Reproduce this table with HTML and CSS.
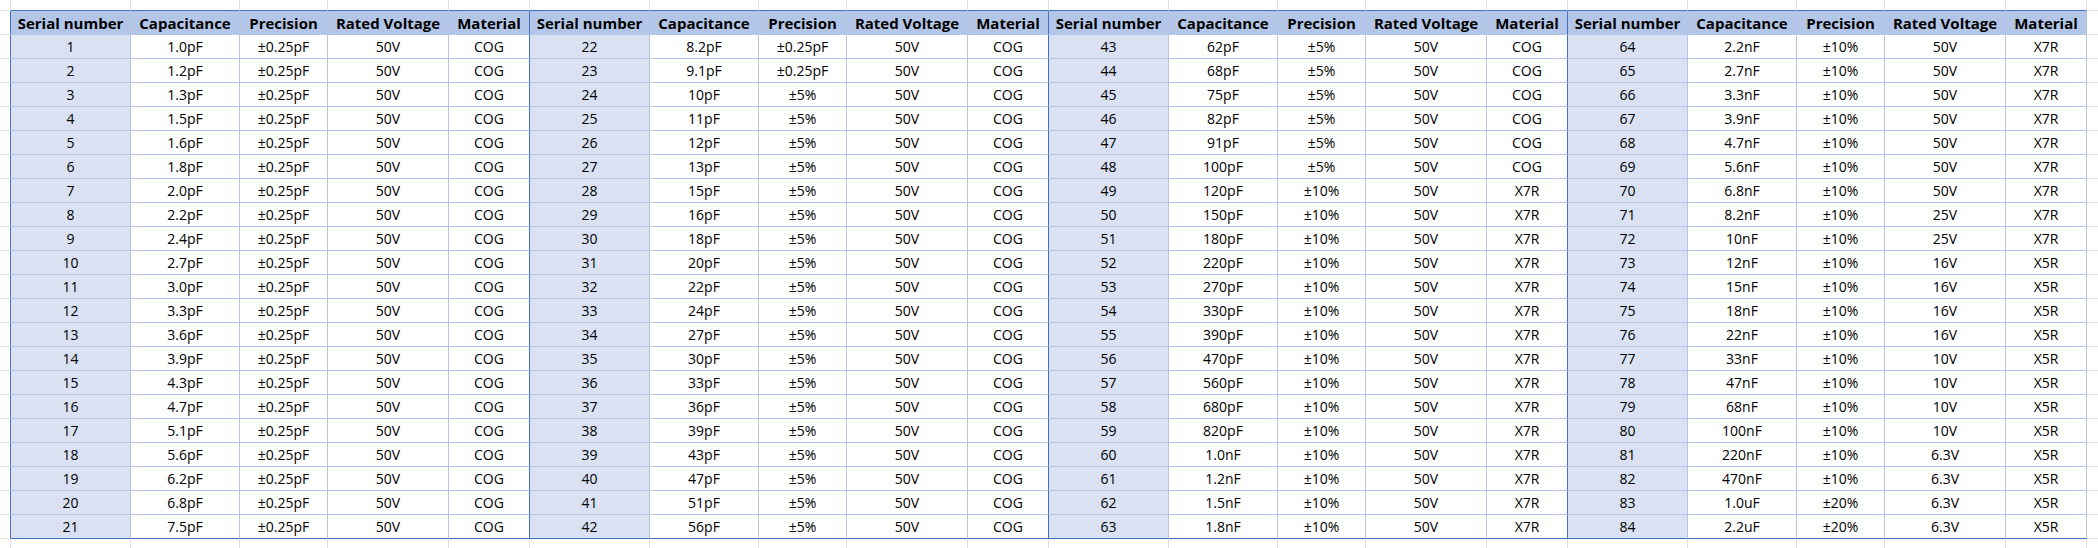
FILE: index.html
```html
<!DOCTYPE html>
<html lang="en">
<head>
<meta charset="utf-8">
<title>Capacitor values</title>
<link rel="stylesheet" href="styles.css">
</head>
<body>
<table class="sheet">
<colgroup>
<col class="w-edge">
<col class="w1"><col class="w2"><col class="w3"><col class="w4"><col class="w5">
<col class="w1"><col class="w2"><col class="w3"><col class="w4"><col class="w5">
<col class="w1"><col class="w2"><col class="w3"><col class="w4"><col class="w5">
<col class="w1"><col class="w2"><col class="w3"><col class="w4"><col class="w5">
<col class="w-edge-r">
</colgroup>
<tbody>
<tr class="top"><td class="edge"></td><td></td><td></td><td></td><td></td><td></td><td></td><td></td><td></td><td></td><td></td><td></td><td></td><td></td><td></td><td></td><td></td><td></td><td></td><td></td><td></td><td class="edge-r"></td></tr>
<tr class="head"><td class="edge"></td><th>Serial number</th><th>Capacitance</th><th>Precision</th><th>Rated Voltage</th><th class="end">Material</th><th>Serial number</th><th>Capacitance</th><th>Precision</th><th>Rated Voltage</th><th class="end">Material</th><th>Serial number</th><th>Capacitance</th><th>Precision</th><th>Rated Voltage</th><th class="end">Material</th><th>Serial number</th><th>Capacitance</th><th>Precision</th><th>Rated Voltage</th><th>Material</th><td class="edge-r"></td></tr>
<tr class="r"><td class="edge"></td><td class="sn">1</td><td>1.0pF</td><td>±0.25pF</td><td>50V</td><td class="end">COG</td><td class="sn">22</td><td>8.2pF</td><td>±0.25pF</td><td>50V</td><td class="end">COG</td><td class="sn">43</td><td>62pF</td><td>±5%</td><td>50V</td><td class="end">COG</td><td class="sn">64</td><td>2.2nF</td><td>±10%</td><td>50V</td><td>X7R</td><td class="edge-r"></td></tr>
<tr class="r"><td class="edge"></td><td class="sn">2</td><td>1.2pF</td><td>±0.25pF</td><td>50V</td><td class="end">COG</td><td class="sn">23</td><td>9.1pF</td><td>±0.25pF</td><td>50V</td><td class="end">COG</td><td class="sn">44</td><td>68pF</td><td>±5%</td><td>50V</td><td class="end">COG</td><td class="sn">65</td><td>2.7nF</td><td>±10%</td><td>50V</td><td>X7R</td><td class="edge-r"></td></tr>
<tr class="r"><td class="edge"></td><td class="sn">3</td><td>1.3pF</td><td>±0.25pF</td><td>50V</td><td class="end">COG</td><td class="sn">24</td><td>10pF</td><td>±5%</td><td>50V</td><td class="end">COG</td><td class="sn">45</td><td>75pF</td><td>±5%</td><td>50V</td><td class="end">COG</td><td class="sn">66</td><td>3.3nF</td><td>±10%</td><td>50V</td><td>X7R</td><td class="edge-r"></td></tr>
<tr class="r"><td class="edge"></td><td class="sn">4</td><td>1.5pF</td><td>±0.25pF</td><td>50V</td><td class="end">COG</td><td class="sn">25</td><td>11pF</td><td>±5%</td><td>50V</td><td class="end">COG</td><td class="sn">46</td><td>82pF</td><td>±5%</td><td>50V</td><td class="end">COG</td><td class="sn">67</td><td>3.9nF</td><td>±10%</td><td>50V</td><td>X7R</td><td class="edge-r"></td></tr>
<tr class="r"><td class="edge"></td><td class="sn">5</td><td>1.6pF</td><td>±0.25pF</td><td>50V</td><td class="end">COG</td><td class="sn">26</td><td>12pF</td><td>±5%</td><td>50V</td><td class="end">COG</td><td class="sn">47</td><td>91pF</td><td>±5%</td><td>50V</td><td class="end">COG</td><td class="sn">68</td><td>4.7nF</td><td>±10%</td><td>50V</td><td>X7R</td><td class="edge-r"></td></tr>
<tr class="r"><td class="edge"></td><td class="sn">6</td><td>1.8pF</td><td>±0.25pF</td><td>50V</td><td class="end">COG</td><td class="sn">27</td><td>13pF</td><td>±5%</td><td>50V</td><td class="end">COG</td><td class="sn">48</td><td>100pF</td><td>±5%</td><td>50V</td><td class="end">COG</td><td class="sn">69</td><td>5.6nF</td><td>±10%</td><td>50V</td><td>X7R</td><td class="edge-r"></td></tr>
<tr class="r"><td class="edge"></td><td class="sn">7</td><td>2.0pF</td><td>±0.25pF</td><td>50V</td><td class="end">COG</td><td class="sn">28</td><td>15pF</td><td>±5%</td><td>50V</td><td class="end">COG</td><td class="sn">49</td><td>120pF</td><td>±10%</td><td>50V</td><td class="end">X7R</td><td class="sn">70</td><td>6.8nF</td><td>±10%</td><td>50V</td><td>X7R</td><td class="edge-r"></td></tr>
<tr class="r"><td class="edge"></td><td class="sn">8</td><td>2.2pF</td><td>±0.25pF</td><td>50V</td><td class="end">COG</td><td class="sn">29</td><td>16pF</td><td>±5%</td><td>50V</td><td class="end">COG</td><td class="sn">50</td><td>150pF</td><td>±10%</td><td>50V</td><td class="end">X7R</td><td class="sn">71</td><td>8.2nF</td><td>±10%</td><td>25V</td><td>X7R</td><td class="edge-r"></td></tr>
<tr class="r"><td class="edge"></td><td class="sn">9</td><td>2.4pF</td><td>±0.25pF</td><td>50V</td><td class="end">COG</td><td class="sn">30</td><td>18pF</td><td>±5%</td><td>50V</td><td class="end">COG</td><td class="sn">51</td><td>180pF</td><td>±10%</td><td>50V</td><td class="end">X7R</td><td class="sn">72</td><td>10nF</td><td>±10%</td><td>25V</td><td>X7R</td><td class="edge-r"></td></tr>
<tr class="r"><td class="edge"></td><td class="sn">10</td><td>2.7pF</td><td>±0.25pF</td><td>50V</td><td class="end">COG</td><td class="sn">31</td><td>20pF</td><td>±5%</td><td>50V</td><td class="end">COG</td><td class="sn">52</td><td>220pF</td><td>±10%</td><td>50V</td><td class="end">X7R</td><td class="sn">73</td><td>12nF</td><td>±10%</td><td>16V</td><td>X5R</td><td class="edge-r"></td></tr>
<tr class="r"><td class="edge"></td><td class="sn">11</td><td>3.0pF</td><td>±0.25pF</td><td>50V</td><td class="end">COG</td><td class="sn">32</td><td>22pF</td><td>±5%</td><td>50V</td><td class="end">COG</td><td class="sn">53</td><td>270pF</td><td>±10%</td><td>50V</td><td class="end">X7R</td><td class="sn">74</td><td>15nF</td><td>±10%</td><td>16V</td><td>X5R</td><td class="edge-r"></td></tr>
<tr class="r"><td class="edge"></td><td class="sn">12</td><td>3.3pF</td><td>±0.25pF</td><td>50V</td><td class="end">COG</td><td class="sn">33</td><td>24pF</td><td>±5%</td><td>50V</td><td class="end">COG</td><td class="sn">54</td><td>330pF</td><td>±10%</td><td>50V</td><td class="end">X7R</td><td class="sn">75</td><td>18nF</td><td>±10%</td><td>16V</td><td>X5R</td><td class="edge-r"></td></tr>
<tr class="r"><td class="edge"></td><td class="sn">13</td><td>3.6pF</td><td>±0.25pF</td><td>50V</td><td class="end">COG</td><td class="sn">34</td><td>27pF</td><td>±5%</td><td>50V</td><td class="end">COG</td><td class="sn">55</td><td>390pF</td><td>±10%</td><td>50V</td><td class="end">X7R</td><td class="sn">76</td><td>22nF</td><td>±10%</td><td>16V</td><td>X5R</td><td class="edge-r"></td></tr>
<tr class="r"><td class="edge"></td><td class="sn">14</td><td>3.9pF</td><td>±0.25pF</td><td>50V</td><td class="end">COG</td><td class="sn">35</td><td>30pF</td><td>±5%</td><td>50V</td><td class="end">COG</td><td class="sn">56</td><td>470pF</td><td>±10%</td><td>50V</td><td class="end">X7R</td><td class="sn">77</td><td>33nF</td><td>±10%</td><td>10V</td><td>X5R</td><td class="edge-r"></td></tr>
<tr class="r"><td class="edge"></td><td class="sn">15</td><td>4.3pF</td><td>±0.25pF</td><td>50V</td><td class="end">COG</td><td class="sn">36</td><td>33pF</td><td>±5%</td><td>50V</td><td class="end">COG</td><td class="sn">57</td><td>560pF</td><td>±10%</td><td>50V</td><td class="end">X7R</td><td class="sn">78</td><td>47nF</td><td>±10%</td><td>10V</td><td>X5R</td><td class="edge-r"></td></tr>
<tr class="r"><td class="edge"></td><td class="sn">16</td><td>4.7pF</td><td>±0.25pF</td><td>50V</td><td class="end">COG</td><td class="sn">37</td><td>36pF</td><td>±5%</td><td>50V</td><td class="end">COG</td><td class="sn">58</td><td>680pF</td><td>±10%</td><td>50V</td><td class="end">X7R</td><td class="sn">79</td><td>68nF</td><td>±10%</td><td>10V</td><td>X5R</td><td class="edge-r"></td></tr>
<tr class="r"><td class="edge"></td><td class="sn">17</td><td>5.1pF</td><td>±0.25pF</td><td>50V</td><td class="end">COG</td><td class="sn">38</td><td>39pF</td><td>±5%</td><td>50V</td><td class="end">COG</td><td class="sn">59</td><td>820pF</td><td>±10%</td><td>50V</td><td class="end">X7R</td><td class="sn">80</td><td>100nF</td><td>±10%</td><td>10V</td><td>X5R</td><td class="edge-r"></td></tr>
<tr class="r"><td class="edge"></td><td class="sn">18</td><td>5.6pF</td><td>±0.25pF</td><td>50V</td><td class="end">COG</td><td class="sn">39</td><td>43pF</td><td>±5%</td><td>50V</td><td class="end">COG</td><td class="sn">60</td><td>1.0nF</td><td>±10%</td><td>50V</td><td class="end">X7R</td><td class="sn">81</td><td>220nF</td><td>±10%</td><td>6.3V</td><td>X5R</td><td class="edge-r"></td></tr>
<tr class="r"><td class="edge"></td><td class="sn">19</td><td>6.2pF</td><td>±0.25pF</td><td>50V</td><td class="end">COG</td><td class="sn">40</td><td>47pF</td><td>±5%</td><td>50V</td><td class="end">COG</td><td class="sn">61</td><td>1.2nF</td><td>±10%</td><td>50V</td><td class="end">X7R</td><td class="sn">82</td><td>470nF</td><td>±10%</td><td>6.3V</td><td>X5R</td><td class="edge-r"></td></tr>
<tr class="r"><td class="edge"></td><td class="sn">20</td><td>6.8pF</td><td>±0.25pF</td><td>50V</td><td class="end">COG</td><td class="sn">41</td><td>51pF</td><td>±5%</td><td>50V</td><td class="end">COG</td><td class="sn">62</td><td>1.5nF</td><td>±10%</td><td>50V</td><td class="end">X7R</td><td class="sn">83</td><td>1.0uF</td><td>±20%</td><td>6.3V</td><td>X5R</td><td class="edge-r"></td></tr>
<tr class="r last"><td class="edge"></td><td class="sn">21</td><td>7.5pF</td><td>±0.25pF</td><td>50V</td><td class="end">COG</td><td class="sn">42</td><td>56pF</td><td>±5%</td><td>50V</td><td class="end">COG</td><td class="sn">63</td><td>1.8nF</td><td>±10%</td><td>50V</td><td class="end">X7R</td><td class="sn">84</td><td>2.2uF</td><td>±20%</td><td>6.3V</td><td>X5R</td><td class="edge-r"></td></tr>
<tr class="bot"><td class="edge"></td><td></td><td></td><td></td><td></td><td></td><td></td><td></td><td></td><td></td><td></td><td></td><td></td><td></td><td></td><td></td><td></td><td></td><td></td><td></td><td></td><td class="edge-r"></td></tr>
</tbody>
</table>
</body>
</html>
```

FILE: styles.css
```css
html, body {
  margin: 0;
  padding: 0;
  background: #ffffff;
  overflow: hidden;
}

.sheet {
  border-collapse: separate;
  border-spacing: 0;
  table-layout: fixed;
  width: 2098px;
  font-family: "Open Sans", "Noto Sans", "Liberation Sans", sans-serif;
  font-size: 14px;
  color: #000000;
}

.w-edge { width: 11px; }
.w1 { width: 120px; }
.w2 { width: 109px; }
.w3 { width: 88px; }
.w4 { width: 121px; }
.w5 { width: 81px; }
.w-edge-r { width: 11px; }

.sheet td,
.sheet th {
  padding: 0;
  border: 0;
  border-right: 1px solid #b4c6e7;
  border-bottom: 1px solid #b4c6e7;
  text-align: center;
  vertical-align: middle;
  white-space: nowrap;
  overflow: hidden;
  line-height: 20px;
}

.sheet th {
  font-size: 15px;
  font-weight: 700;
  background: #b4c6e7;
}

.r, .head { height: 24px; }
.top { height: 11px; }
.bot { height: 10px; }

.sheet .sn { background: #d9e1f2; }

.sheet .end { border-right-color: #4472c4; }

/* partial rows / columns outside the table use plain grid lines */
.sheet .edge {
  border-right-color: #4472c4;
  border-bottom-color: #e1e1e1;
}
.sheet .edge-r {
  border-right: 0;
  border-bottom-color: #e1e1e1;
}

.top td {
  border-right-color: #e1e1e1;
  border-bottom-color: #4472c4;
}
.top td.edge,
.top td.edge-r {
  border-right-color: #e1e1e1;
  border-bottom-color: #e1e1e1;
}
.top td.edge-r { border-right: 0; }

.last td,
.last th {
  border-bottom-color: #4472c4;
}
.last td.edge,
.last td.edge-r {
  border-bottom-color: #e1e1e1;
}

.bot td {
  border-right-color: #e1e1e1;
  border-bottom: 0;
}
.bot td.edge { border-right-color: #e1e1e1; }
.bot td.edge-r { border-right: 0; }
```
